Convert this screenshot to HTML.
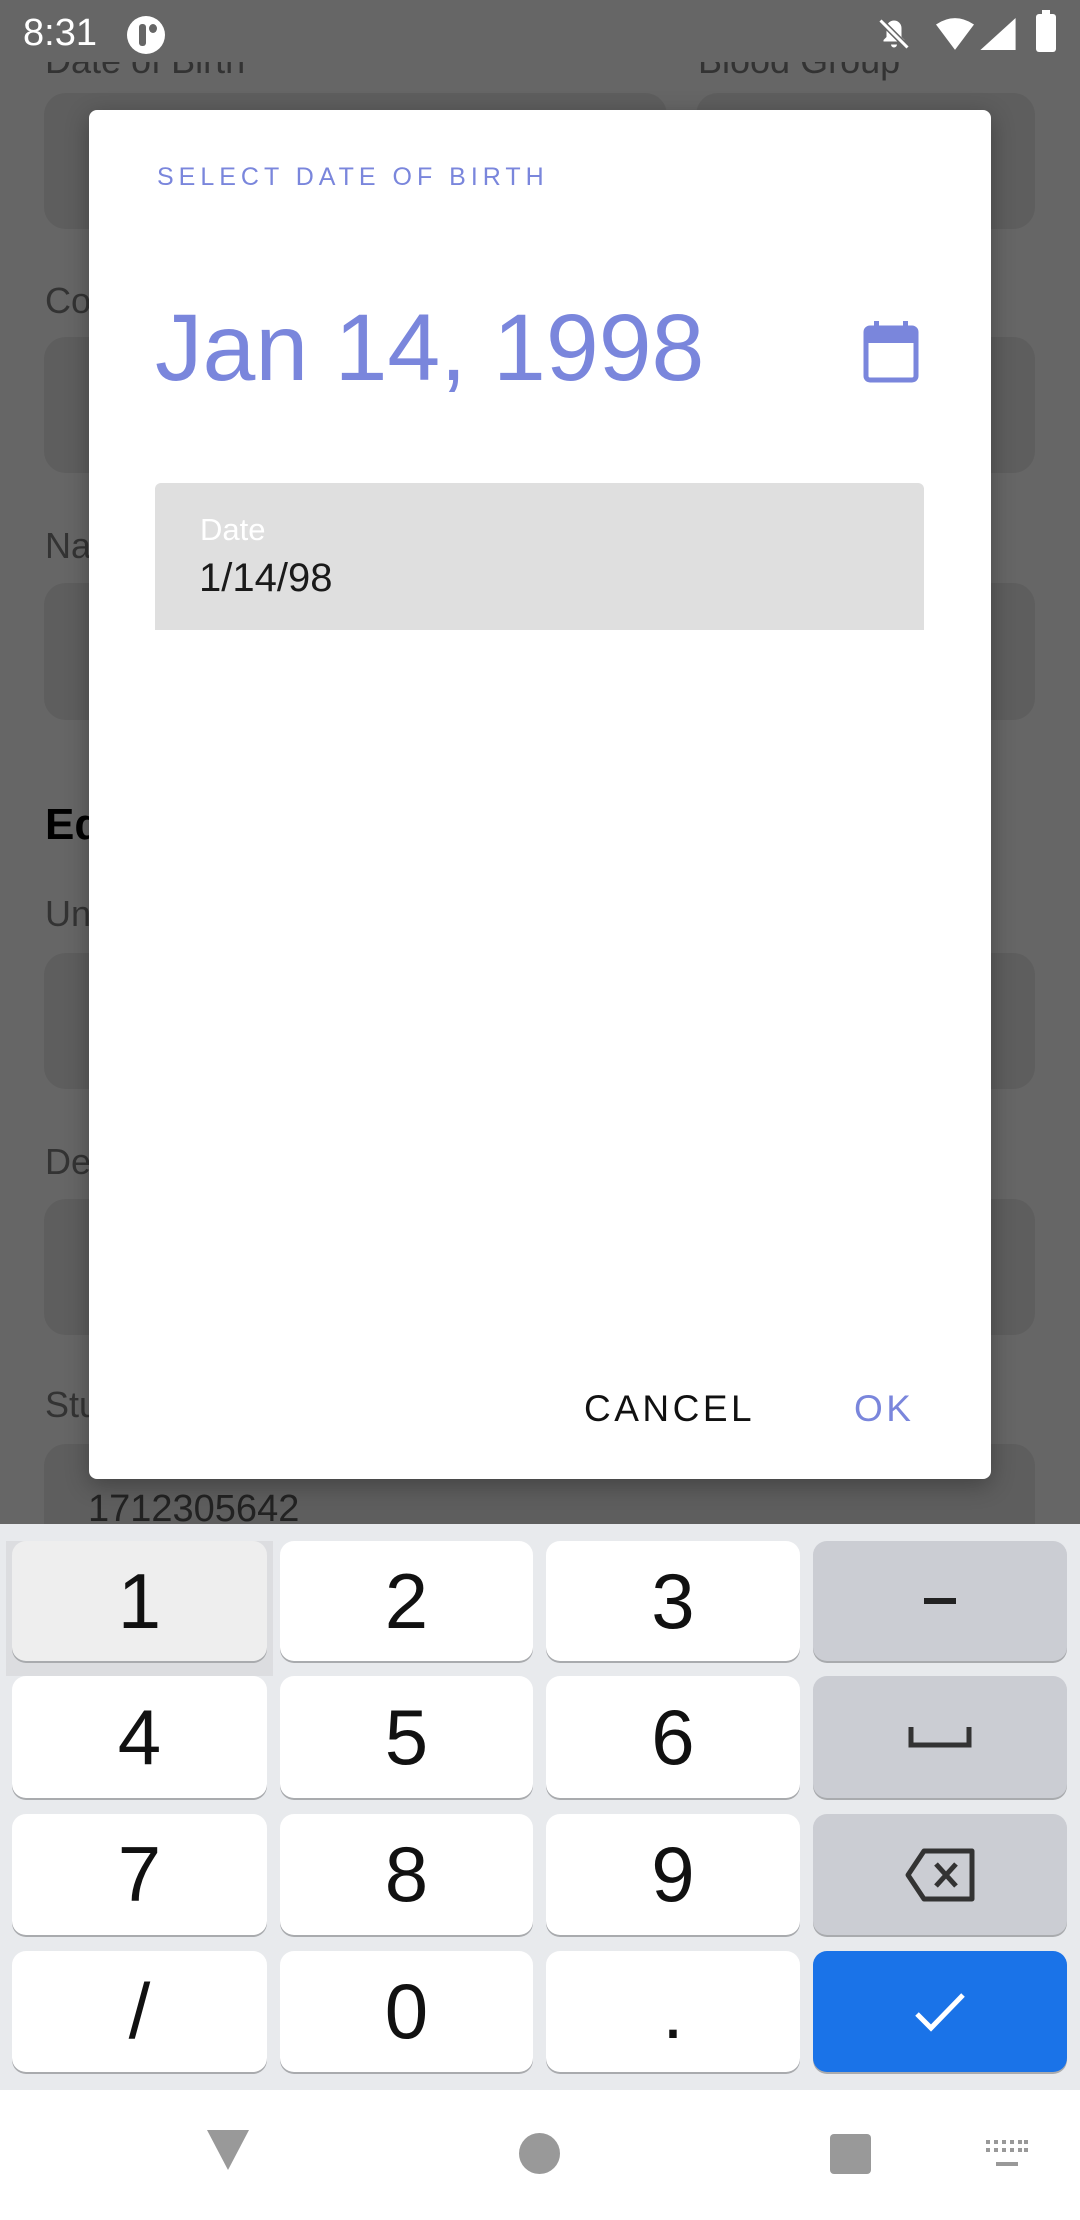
<!DOCTYPE html>
<html><head><meta charset="utf-8"><style>
*{margin:0;padding:0;box-sizing:border-box}
body{width:1080px;height:2220px;position:relative;overflow:hidden;background:#666;font-family:"Liberation Sans",sans-serif}
.a{position:absolute}
.box{position:absolute;background:#5e5e5e;border-radius:22px}
.lbl{position:absolute;color:#333;font-size:36px}
.key{position:absolute;background:#fff;border-radius:14px;box-shadow:0 2px 0 #a9abae;display:flex;align-items:center;justify-content:center;font-size:78px;color:#111}
.fn{background:#cbcdd3}
</style></head><body>
<!-- background form (dimmed) -->
<div class="lbl" style="left:45px;top:40px">Date of Birth</div>
<div class="lbl" style="left:698px;top:40px">Blood Group</div>
<div class="a" style="left:0;top:0;width:1080px;height:62px;background:#666"></div>
<div class="box" style="left:44px;top:93px;width:623px;height:136px"></div>
<div class="box" style="left:696px;top:93px;width:339px;height:136px"></div>
<div class="lbl" style="left:45px;top:280px">Co</div>
<div class="box" style="left:44px;top:337px;width:991px;height:136px"></div>
<div class="lbl" style="left:45px;top:525px">Na</div>
<div class="box" style="left:44px;top:583px;width:991px;height:137px"></div>
<div class="lbl" style="left:45px;top:800px;font-size:44px;font-weight:bold;color:#000">Ed</div>
<div class="lbl" style="left:45px;top:893px">Un</div>
<div class="box" style="left:44px;top:953px;width:991px;height:136px"></div>
<div class="lbl" style="left:45px;top:1141px">De</div>
<div class="box" style="left:44px;top:1199px;width:991px;height:136px"></div>
<div class="lbl" style="left:45px;top:1384px">Stu</div>
<div class="box" style="left:44px;top:1444px;width:991px;height:136px"></div>
<div class="lbl" style="left:88px;top:1488px;font-size:38px;color:#222">1712305642</div>
<!-- status bar -->
<div class="a" style="left:23px;top:12px;color:#fff;font-size:38px">8:31</div>
<div class="a" style="left:127px;top:16px;width:38px;height:38px;border-radius:50%;background:#fff"></div>
<div class="a" style="left:139px;top:24px;width:7px;height:22px;background:#666;border-radius:3px"></div>
<div class="a" style="left:149px;top:24px;width:8px;height:9px;background:#666;border-radius:50%"></div>
<svg class="a" style="left:876px;top:16px" width="36" height="36" viewBox="0 0 24 24"><path d="M12 3a5 5 0 0 0-5 5v6l-2 2v1h14v-1l-2-2V8a5 5 0 0 0-5-5zM10 19h4a2 2 0 0 1-4 0z" fill="#fff"/><path d="M3 3l18 18" stroke="#666" stroke-width="4"/><path d="M3 3l18 18" stroke="#fff" stroke-width="2"/></svg>
<svg class="a" style="left:936px;top:18px" width="38" height="32" viewBox="0 0 24 20"><path d="M0 4Q12-4 24 4L12 20Z" fill="#fff"/></svg>
<svg class="a" style="left:980px;top:18px" width="36" height="32" viewBox="0 0 22 20"><path d="M22 0V20H0Z" fill="#fff"/></svg>
<div class="a" style="left:1036px;top:14px;width:20px;height:38px;background:#fff;border-radius:3px"></div>
<div class="a" style="left:1042px;top:10px;width:8px;height:5px;background:#fff"></div>
<!-- dialog -->
<div class="a" style="left:89px;top:110px;width:902px;height:1369px;background:#fff;border-radius:8px;box-shadow:0 6px 24px rgba(0,0,0,.3)"></div>
<div class="a" style="left:157px;top:163px;font-size:25px;letter-spacing:5px;color:#7a86dc">SELECT DATE OF BIRTH</div>
<div class="a" style="left:155px;top:296px;font-size:95px;color:#7a86dc;line-height:1.1;letter-spacing:0px">Jan 14, 1998</div>
<svg class="a" style="left:861px;top:318px" width="60" height="66" viewBox="0 0 60 66"><rect x="5" y="10" width="50" height="52" rx="4" fill="none" stroke="#7a86dc" stroke-width="5"/><rect x="5" y="10" width="50" height="15" fill="#7a86dc"/><rect x="13" y="3" width="5" height="10" fill="#7a86dc"/><rect x="42" y="3" width="5" height="10" fill="#7a86dc"/></svg>
<div class="a" style="left:155px;top:483px;width:769px;height:147px;background:#dfdfdf;border-radius:6px 6px 0 0"></div>
<div class="a" style="left:200px;top:512px;font-size:31px;color:#fff">Date</div>
<div class="a" style="left:199px;top:556px;font-size:40px;color:#1a1a1a">1/14/98</div>
<div class="a" style="left:584px;top:1388px;font-size:37px;letter-spacing:3.5px;color:#111;font-weight:500">CANCEL</div>
<div class="a" style="left:854px;top:1388px;font-size:37px;letter-spacing:3.5px;color:#7a86dc">OK</div>
<!-- keyboard -->
<div class="a" style="left:0;top:1524px;width:1080px;height:566px;background:#e8eaed"></div>
<div class="a" style="left:6px;top:1541px;width:267px;height:135px;background:#dcdde0"></div>
<div class="key" style="left:12px;top:1541px;width:255px;height:120px;background:#eeeeee">1</div>
<div class="key" style="left:280px;top:1541px;width:253px;height:120px">2</div>
<div class="key" style="left:546px;top:1541px;width:254px;height:120px">3</div>
<div class="key fn" style="left:813px;top:1541px;width:254px;height:120px"><div style="width:32px;height:6px;background:#222"></div></div>
<div class="key" style="left:12px;top:1676px;width:255px;height:122px">4</div>
<div class="key" style="left:280px;top:1676px;width:253px;height:122px">5</div>
<div class="key" style="left:546px;top:1676px;width:254px;height:122px">6</div>
<div class="key fn" style="left:813px;top:1676px;width:254px;height:122px"><svg width="64" height="24" viewBox="0 0 64 24"><path d="M3 2V20H61V2" fill="none" stroke="#333" stroke-width="5"/></svg></div>
<div class="key" style="left:12px;top:1814px;width:255px;height:121px">7</div>
<div class="key" style="left:280px;top:1814px;width:253px;height:121px">8</div>
<div class="key" style="left:546px;top:1814px;width:254px;height:121px">9</div>
<div class="key fn" style="left:813px;top:1814px;width:254px;height:121px"><svg width="72" height="54" viewBox="0 0 72 54"><path d="M20 3H68V51H20L4 27Z" fill="none" stroke="#333" stroke-width="5" stroke-linejoin="round"/><path d="M32 16l20 22M52 16L32 38" stroke="#333" stroke-width="5"/></svg></div>
<div class="key" style="left:12px;top:1951px;width:255px;height:121px">/</div>
<div class="key" style="left:280px;top:1951px;width:253px;height:121px">0</div>
<div class="key" style="left:546px;top:1951px;width:254px;height:121px">.</div>
<div class="key" style="left:813px;top:1951px;width:254px;height:121px;background:#1a73e8"><svg width="54" height="44" viewBox="0 0 54 44"><path d="M4 24l14 14L50 5" fill="none" stroke="#fff" stroke-width="5"/></svg></div>
<!-- nav bar -->
<div class="a" style="left:0;top:2090px;width:1080px;height:130px;background:#fff"></div>
<svg class="a" style="left:206px;top:2128px" width="44" height="44" viewBox="0 0 44 44"><path d="M1 2H43L22 42Z" fill="#999"/></svg>
<div class="a" style="left:519px;top:2133px;width:41px;height:41px;border-radius:50%;background:#999"></div>
<div class="a" style="left:830px;top:2134px;width:41px;height:40px;border-radius:4px;background:#999"></div>
<svg class="a" style="left:986px;top:2140px" width="42" height="28" viewBox="0 0 42 28"><g fill="#999"><rect x="0" y="0" width="4" height="4"/><rect x="8" y="0" width="4" height="4"/><rect x="16" y="0" width="4" height="4"/><rect x="24" y="0" width="4" height="4"/><rect x="32" y="0" width="4" height="4"/><rect x="38" y="0" width="4" height="4"/><rect x="0" y="8" width="4" height="4"/><rect x="8" y="8" width="4" height="4"/><rect x="16" y="8" width="4" height="4"/><rect x="24" y="8" width="4" height="4"/><rect x="32" y="8" width="4" height="4"/><rect x="38" y="8" width="4" height="4"/><rect x="10" y="22" width="22" height="4"/></g></svg>
</body></html>
